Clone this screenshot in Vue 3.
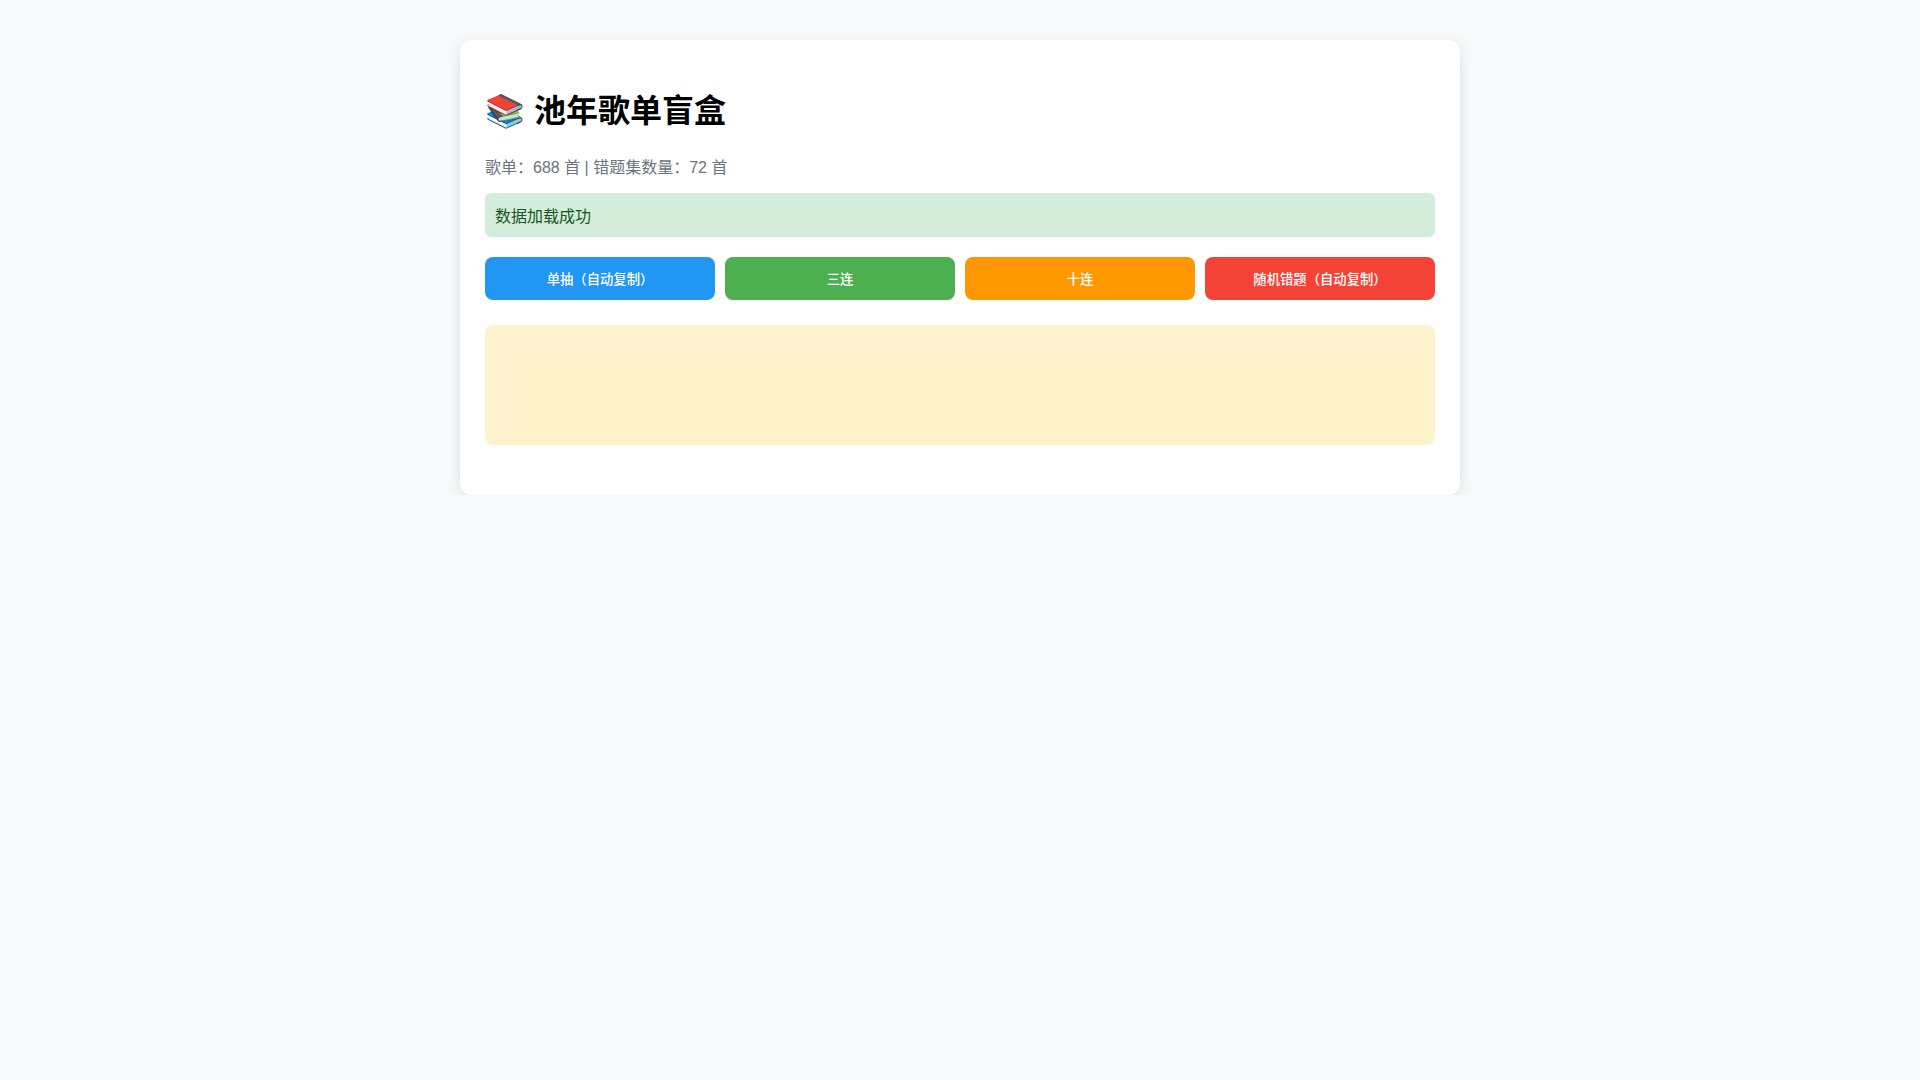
<script setup>
const buttons = [
  { label: '单抽（自动复制）', tone: 'blue' },
  { label: '三连', tone: 'green' },
  { label: '十连', tone: 'orange' },
  { label: '随机错题（自动复制）', tone: 'red' }
]
</script>

<template>
  <main class="card">
    <h1 class="title">📚 池年歌单盲盒</h1>
    <p class="stats">歌单：688 首 | 错题集数量：72 首</p>
    <div class="status">数据加载成功</div>
    <div class="actions">
      <button v-for="b in buttons" :key="b.label" class="btn" :class="b.tone">{{ b.label }}</button>
    </div>
    <div class="result"></div>
  </main>
</template>

<style>
body { margin: 0; background: #f8f9fa; }
</style>

<style scoped>
.card {
  box-sizing: border-box;
  width: 1000px;
  margin: 40px auto 0;
  padding: 25px;
  height: 455px;
  background: #fff;
  border-radius: 12px;
  box-shadow: 0 4px 16px rgba(0, 0, 0, 0.1);
  font-family: "Liberation Sans", "Noto Sans CJK SC", sans-serif;
  font-size: 16px;
}
.title {
  margin: 20px 0 23px;
  font-size: 32px;
  font-weight: 700;
  color: #000;
}
.stats {
  margin: 0 0 15px;
  color: #6c757d;
}
.status {
  padding: 10px;
  border-radius: 6px;
  background: #d4edda;
  color: #155724;
}
.actions {
  display: grid;
  grid-template-columns: repeat(4, 1fr);
  gap: 10px;
  margin-top: 20px;
}
.btn {
  height: 43px;
  border: 0;
  border-radius: 8px;
  color: #fff;
  font: 500 13.333px "Liberation Sans", "Noto Sans CJK SC", sans-serif;
}
.blue { background: #2196f3; }
.green { background: #4caf50; }
.orange { background: #ff9800; }
.red { background: #f44336; }
.result {
  height: 120px;
  margin-top: 25px;
  border-radius: 8px;
  background: #fff3cd;
}
</style>
